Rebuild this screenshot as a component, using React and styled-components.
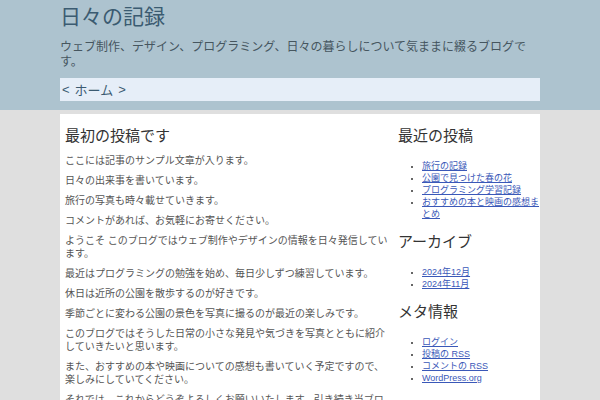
import React from "react";
import styled, { createGlobalStyle } from "styled-components";

const Global = createGlobalStyle`
  html, body { margin: 0; padding: 0; }
  body {
    background: #dfdfdf;
    font-family: "Liberation Sans", "Noto Sans CJK JP", sans-serif;
    color: #333;
  }
  * { box-sizing: border-box; }
`;

const Header = styled.header`
  background: #adc3cf;
  padding: 4px 0 9px;
`;

const Wrap = styled.div`
  width: 480px;
  margin: 0 auto;
`;

const SiteTitle = styled.h1`
  margin: 0;
  font-size: 21px;
  font-weight: normal;
  line-height: 26px;
  color: #3b5b71;
`;

const Tagline = styled.p`
  margin: 10px 0 8px;
  max-width: 470px;
  font-size: 12px;
  line-height: 15px;
  color: #46565f;
`;

const NavBar = styled.nav`
  background: #e6eef8;
  height: 23px;
  display: flex;
  align-items: center;
  gap: 5px;
  padding: 0 2px;
  font-size: 13px;
  color: #3b5b71;
`;

const Body = styled.div`
  width: 480px;
  margin: 4px auto 0;
  background: #fff;
  display: flex;
  min-height: 290px;
`;

const Main = styled.main`
  width: 338px;
  padding: 12px 8px 0 5px;
`;

const PostTitle = styled.h2`
  margin: 0 0 8px;
  font-size: 15px;
  font-weight: normal;
  line-height: 20px;
  color: #333;
`;

const Para = styled.p`
  margin: 0 0 7px;
  font-size: 10px;
  line-height: 13px;
  color: #555;
`;

const Side = styled.aside`
  flex: 1;
  padding: 12px 0 0 0;
`;

const WidgetTitle = styled.h3`
  margin: 0 0 14px;
  font-size: 15px;
  font-weight: normal;
  line-height: 20px;
  color: #333;
`;

const List = styled.ul`
  margin: 0 0 12px;
  padding-left: 24px;
  font-size: 9px;
  line-height: 12px;
  color: #333;
  li::marker { font-size: 8px; }
`;

const Item = styled.li``;

const Link = styled.a`
  color: #3a58b8;
  text-decoration: underline;
`;

const paras = [
  "ここには記事のサンプル文章が入ります。",
  "日々の出来事を書いています。",
  "旅行の写真も時々載せていきます。",
  "コメントがあれば、お気軽にお寄せください。",
  "ようこそ このブログではウェブ制作やデザインの情報を日々発信しています。",
  "最近はプログラミングの勉強を始め、毎日少しずつ練習しています。",
  "休日は近所の公園を散歩するのが好きです。",
  "季節ごとに変わる公園の景色を写真に撮るのが最近の楽しみです。",
  "このブログではそうした日常の小さな発見や気づきを写真とともに紹介していきたいと思います。",
  "また、おすすめの本や映画についての感想も書いていく予定ですので、楽しみにしていてください。",
  "それでは、これからどうぞよろしくお願いいたします。引き続き当ブログをご愛読いただけると幸いです。",
];

const recent = [
  "旅行の記録",
  "公園で見つけた春の花",
  "プログラミング学習記録",
  "おすすめの本と映画の感想まとめ",
];

const archives = ["2024年12月", "2024年11月"];

const meta = ["ログイン", "投稿の RSS", "コメントの RSS", "WordPress.org"];

export default function App() {
  return (
    <>
      <Global />
      <Header>
        <Wrap>
          <SiteTitle>日々の記録</SiteTitle>
          <Tagline>
            ウェブ制作、デザイン、プログラミング、日々の暮らしについて気ままに綴るブログです。
          </Tagline>
          <NavBar>
            <span>&lt;</span>
            <span>ホーム</span>
            <span>&gt;</span>
          </NavBar>
        </Wrap>
      </Header>
      <Body>
        <Main>
          <PostTitle>最初の投稿です</PostTitle>
          {paras.map((p, i) => (
            <Para key={i}>{p}</Para>
          ))}
        </Main>
        <Side>
          <WidgetTitle>最近の投稿</WidgetTitle>
          <List>
            {recent.map((t) => (
              <Item key={t}><Link href="#">{t}</Link></Item>
            ))}
          </List>
          <WidgetTitle>アーカイブ</WidgetTitle>
          <List>
            {archives.map((t) => (
              <Item key={t}><Link href="#">{t}</Link></Item>
            ))}
          </List>
          <WidgetTitle>メタ情報</WidgetTitle>
          <List>
            {meta.map((t) => (
              <Item key={t}><Link href="#">{t}</Link></Item>
            ))}
          </List>
        </Side>
      </Body>
    </>
  );
}
